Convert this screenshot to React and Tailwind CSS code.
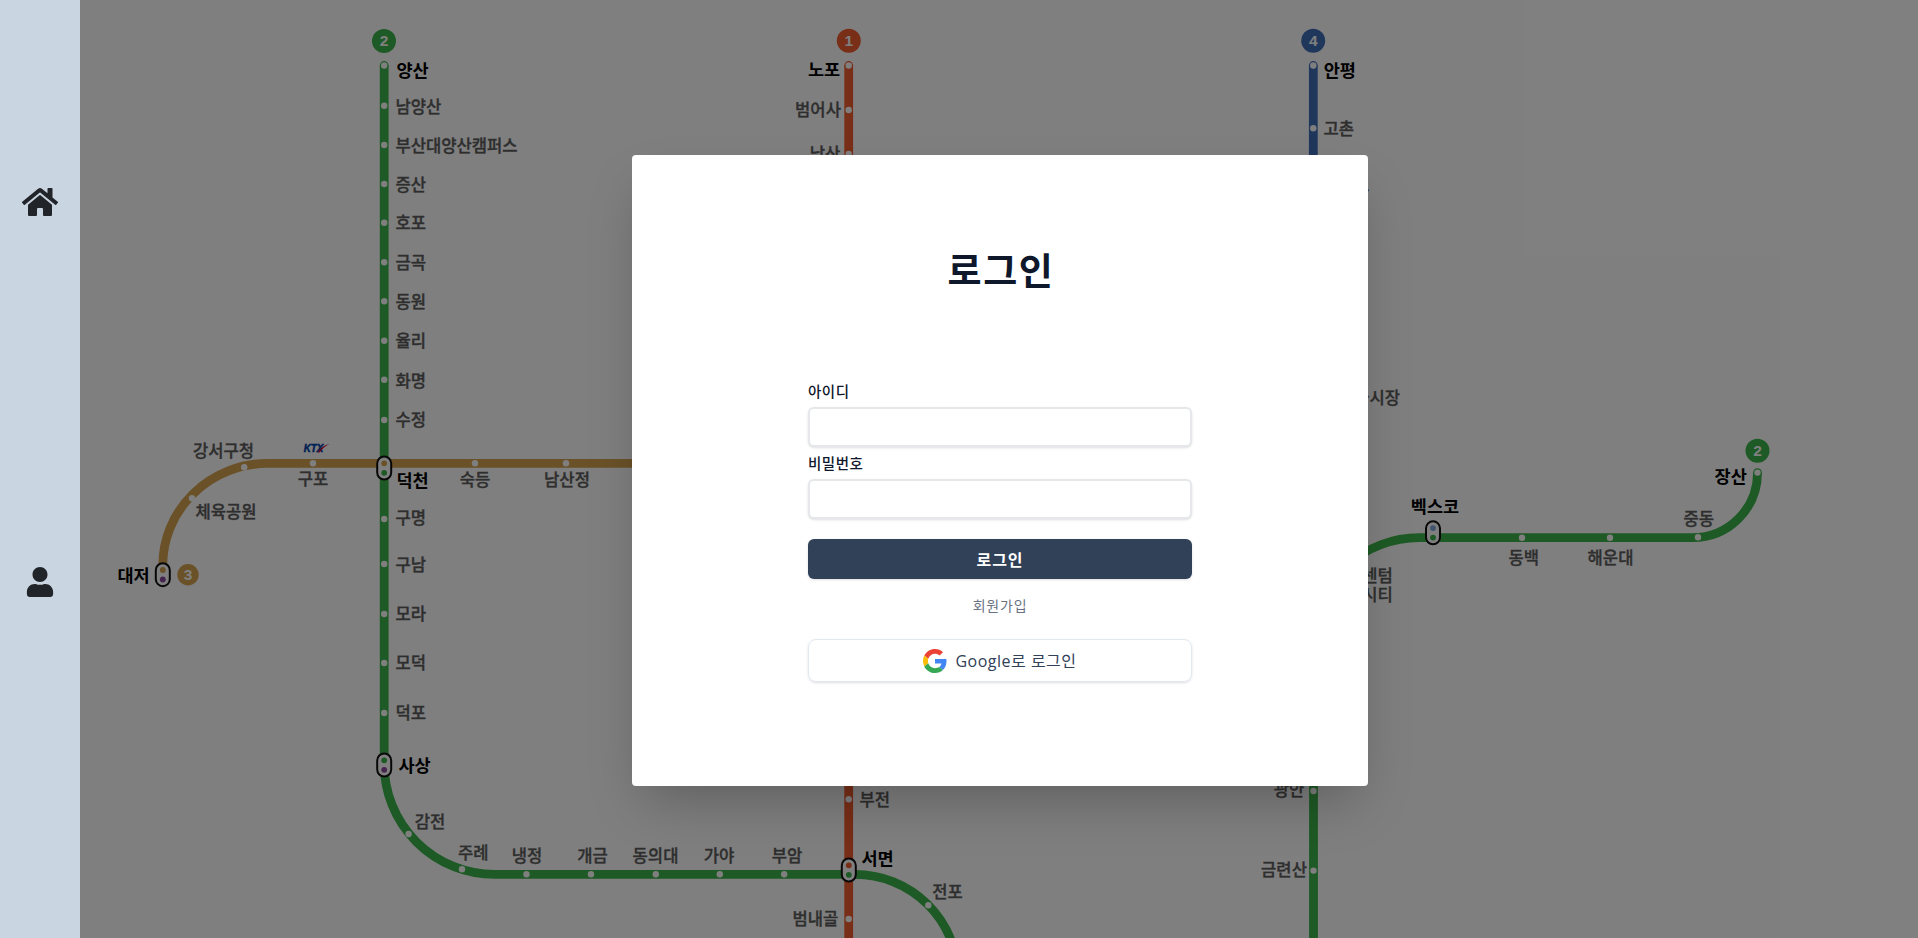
import { FaHome, FaUser } from "react-icons/fa";

const GREEN = "#3cb44a";
const ORANGE = "#f05c2e";
const BLUE = "#406eb8";
const GOLD = "#d4a250";
const PURPLE = "#8a4aa0";
const SKY = "#7fa6dc";

// [name, x, centre y, anchor]
const STATIONS = [
  ["남양산", 395.5, 106.5, "start"],
  ["부산대양산캠퍼스", 395.5, 145.5, "start"],
  ["증산", 395.5, 184.5, "start"],
  ["호포", 395.5, 222.5, "start"],
  ["금곡", 395.5, 262.5, "start"],
  ["동원", 395.5, 301.5, "start"],
  ["율리", 395.5, 341, "start"],
  ["화명", 395.5, 380.5, "start"],
  ["수정", 395.5, 420, "start"],
  ["숙등", 475, 480, "middle"],
  ["남산정", 567, 480, "middle"],
  ["구명", 395.5, 518, "start"],
  ["구남", 395.5, 564.5, "start"],
  ["모라", 395.5, 613.5, "start"],
  ["모덕", 395.5, 663, "start"],
  ["덕포", 395.5, 713, "start"],
  ["감전", 430, 822, "middle"],
  ["주례", 473.3, 852.5, "middle"],
  ["냉정", 527, 856, "middle"],
  ["개금", 592.5, 856, "middle"],
  ["동의대", 655.5, 856, "middle"],
  ["가야", 719, 856, "middle"],
  ["부암", 787, 856, "middle"],
  ["전포", 947.5, 891.5, "middle"],
  ["범내골", 815.3, 919, "middle"],
  ["부전", 874.7, 799.5, "middle"],
  ["범어사", 818, 110, "middle"],
  ["남산", 825, 153.5, "middle"],
  ["고촌", 1338.7, 129, "middle"],
  ["윗반송", 1323.4, 190, "start"],
  ["강서구청", 223.5, 450.5, "middle"],
  ["체육공원", 226, 512, "middle"],
  ["구포", 313, 479, "middle"],
  ["반여농산물시장", 1400, 398, "end"],
  ["동백", 1523.7, 557.5, "middle"],
  ["해운대", 1610.5, 557.5, "middle"],
  ["중동", 1698.7, 518.5, "middle"],
  ["광안", 1289, 790, "middle"],
  ["금련산", 1284, 870, "middle"],
];

const MAJOR = [
  ["양산", 412.5, 70],
  ["덕천", 412.5, 480],
  ["사상", 414.5, 765],
  ["서면", 877.5, 858],
  ["노포", 824, 69.5],
  ["안평", 1339.8, 70],
  ["대저", 133.5, 575],
  ["벡스코", 1435, 506],
  ["장산", 1730.7, 476.5],
];

const DOTS = [
  [384.2, 65.5], [384.2, 105.7], [384.2, 145], [384.2, 184], [384.2, 222.7], [384.2, 262.3],
  [384.2, 301.3], [384.2, 340.8], [384.2, 379.8], [384.2, 420], [384.2, 519], [384.2, 564],
  [384.2, 614], [384.2, 663], [384.2, 713], [408.6, 834], [462, 869.3], [526.5, 874.3],
  [591, 874.3], [655.8, 874.3], [719.8, 874.3], [784.2, 874.3], [928.3, 905.3], [192, 498.2],
  [244.2, 467.2], [313, 463.3], [475, 463.3], [566, 463.3], [848.7, 65.5], [848.7, 110],
  [848.7, 154], [848.7, 799.3], [848.7, 919], [1313.3, 65.5], [1313.3, 128.3], [1313.5, 791],
  [1313.5, 870.6], [1522, 537.7], [1610, 537.7], [1698, 537.2], [1757.5, 472.6],
];

const TRANSFERS = [
  [384.2, 468, GOLD, GREEN],
  [384.2, 765, GREEN, PURPLE],
  [162.8, 574.7, GOLD, PURPLE],
  [848.8, 870, ORANGE, GREEN],
  [1433, 532.8, SKY, GREEN],
];

const BADGES = [
  ["2", 384, 41, 12, GREEN],
  ["1", 848.8, 40.8, 12, ORANGE],
  ["4", 1313.2, 40.8, 12, BLUE],
  ["3", 188, 574.7, 10.7, GOLD],
  ["2", 1757.5, 450.8, 12, GREEN],
];

function SubwayMap() {
  return (
    <svg width="1918" height="938" viewBox="0 0 1918 938" className="block">
      <g fill="none" strokeWidth="8.8">
        <path stroke={GOLD} d="M162.8 566 A105 102 0 0 1 267 463.4 H860" />
        <path stroke={GREEN} d="M384.2 65.5 V764 A110.5 110.5 0 0 0 494.7 874.4 H855 A103 103 0 0 1 958 977" />
        <path stroke={ORANGE} d="M848.7 65.5 V940" />
        <path stroke={BLUE} d="M1313.3 65.5 V500" />
        <path stroke={GREEN} d="M1313.5 940 V640 A106 102 0 0 1 1420 537.7 H1692.5 A65 65 0 0 0 1757.5 472.6" />
      </g>
      <circle cx="384.2" cy="65.5" r="4.4" fill={GREEN} />
      <circle cx="848.7" cy="65.5" r="4.4" fill={ORANGE} />
      <circle cx="1313.3" cy="65.5" r="4.4" fill={BLUE} />
      <circle cx="1757.5" cy="472.6" r="4.4" fill={GREEN} />
      {DOTS.map(([x, y], i) => (
        <circle key={i} cx={x} cy={y} r="3.2" fill="#fff" />
      ))}
      {TRANSFERS.map(([x, y, a, b], i) => (
        <g key={i}>
          <rect x={x - 7} y={y - 11.5} width="14" height="23" rx="7" fill="#fff" stroke="#111" strokeWidth="2" />
          <circle cx={x} cy={y - 4.7} r="2.9" fill={a} />
          <circle cx={x} cy={y + 4.8} r="2.9" fill={b} />
        </g>
      ))}
      {BADGES.map(([n, x, y, r, c], i) => (
        <g key={i}>
          <circle cx={x} cy={y} r={r} fill={c} />
          <text x={x} y={y + 5.4} textAnchor="middle" fill="#fff" className="font-['Liberation_Sans',sans-serif] text-[15.5px] font-bold">
            {n}
          </text>
        </g>
      ))}
      <g fill="#5c5c5c" stroke="#5c5c5c" strokeWidth="0.35" className="font-['Noto_Sans_CJK_KR',sans-serif] text-[16.6px] font-medium">
        {STATIONS.map(([name, x, y, anchor]) => (
          <text key={name} x={x} y={y + 6.4} textAnchor={anchor}>
            {name}
          </text>
        ))}
        <text textAnchor="end">
          <tspan x="1392.8" y="582.4">센텀</tspan>
          <tspan x="1392.8" y="601.4">시티</tspan>
        </text>
      </g>
      <g fill="#000" className="font-['Noto_Sans_CJK_KR',sans-serif] text-[17.5px] font-bold">
        {MAJOR.map(([name, x, y]) => (
          <text key={name} x={x} y={y + 6.6} textAnchor="middle">
            {name}
          </text>
        ))}
      </g>
      <text x="303.8" y="452.3" fill="#0040a8" stroke="#0040a8" strokeWidth="0.5" textLength="19.5" lengthAdjust="spacingAndGlyphs" className="font-['Liberation_Sans',sans-serif] text-[10.5px] font-bold italic">
        KTX
      </text>
      <path d="M317.5 452.4 C320.5 447.8 324.5 444.8 329.6 444 C325.5 446 322.3 448.5 319.6 452.4 Z" fill="#c8103c" />
    </svg>
  );
}

function GoogleLogo() {
  return (
    <svg viewBox="0 0 48 48" className="size-6">
      <path fill="#EA4335" d="M24 9.5c3.54 0 6.71 1.22 9.21 3.6l6.85-6.85C35.9 2.38 30.47 0 24 0 14.62 0 6.51 5.38 2.56 13.22l7.98 6.19C12.43 13.72 17.74 9.5 24 9.5z" />
      <path fill="#4285F4" d="M46.98 24.55c0-1.57-.15-3.09-.38-4.55H24v9.02h12.94c-.58 2.96-2.26 5.48-4.78 7.18l7.73 6c4.51-4.18 7.09-10.36 7.09-17.65z" />
      <path fill="#FBBC05" d="M10.53 28.59c-.48-1.45-.76-2.99-.76-4.59s.27-3.14.76-4.59l-7.98-6.19C.92 16.46 0 20.12 0 24c0 3.88.92 7.54 2.56 10.78l7.97-6.19z" />
      <path fill="#34A853" d="M24 48c6.48 0 11.93-2.13 15.89-5.81l-7.73-6c-2.15 1.45-4.92 2.3-8.16 2.3-6.26 0-11.57-4.22-13.47-9.91l-7.98 6.19C6.51 42.62 14.62 48 24 48z" />
    </svg>
  );
}

function Field({ label, type }) {
  return (
    <label className="flex flex-col">
      <span className="h-8 pt-1.5 text-[14.5px] leading-5 font-medium tracking-[0.5px] text-slate-900">{label}</span>
      <input type={type} className="h-10 w-full rounded-md border-2 border-gray-200 bg-white px-3 shadow-sm outline-none" />
    </label>
  );
}

function LoginDialog() {
  return (
    <div className="flex h-[631px] w-[736px] flex-col items-center rounded bg-white shadow-2xl">
      <h1 className="mt-[94px] h-[126px] pl-0.5 text-[37px] leading-10 font-bold tracking-[1.6px] text-slate-900">로그인</h1>
      <form className="flex w-96 flex-col">
        <Field label="아이디" type="text" />
        <Field label="비밀번호" type="password" />
        <button type="button" className="mt-5 h-10 rounded-md bg-slate-700 text-base leading-6 font-bold tracking-[1px] text-white shadow-sm">
          로그인
        </button>
        <a className="mt-4 self-center text-sm leading-5 tracking-[0.8px] text-gray-500">회원가입</a>
        <button type="button" className="mt-6 flex h-[43px] items-center justify-center gap-2 rounded-lg border border-slate-200 text-base text-slate-700 shadow-sm">
          <GoogleLogo />
          <span className="font-['Open_Sans','Noto_Sans_CJK_KR',sans-serif] leading-6 tracking-[0.5px]">Google로 로그인</span>
        </button>
      </form>
    </div>
  );
}

export default function App() {
  return (
    <div className="relative h-[938px] w-full overflow-hidden bg-white font-['Noto_Sans_CJK_KR',sans-serif]">
      <SubwayMap />
      <div className="absolute inset-0 flex bg-black/50">
        <nav className="flex w-20 shrink-0 flex-col items-center bg-slate-300 text-[#212529]">
          <FaHome className="mt-[184px] size-9" />
          <FaUser className="mt-[347px] size-[30px]" />
        </nav>
        <main className="flex grow items-start justify-center pt-[155px] pl-0.5">
          <LoginDialog />
        </main>
      </div>
    </div>
  );
}
